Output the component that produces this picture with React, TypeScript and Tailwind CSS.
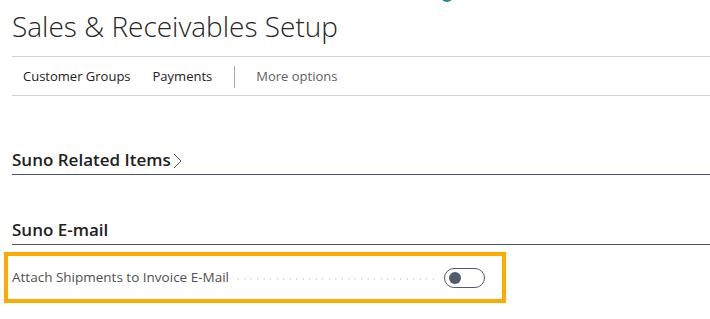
import React, { useState } from "react";

const font = { fontFamily: '"Open Sans", "Noto Sans", sans-serif' };

const actions = ["Customer Groups", "Payments"];

export default function App() {
  const [attach, setAttach] = useState(false);

  return (
    <div
      className="relative h-[319px] w-[710px] overflow-hidden bg-white pl-3 text-[#212121]"
      style={font}
    >
      {/* teal bit peeking in at the top */}
      <div className="absolute left-[441px] top-[-10px] h-[12px] w-[12px] rounded-full bg-[#1e8c8c]" />

      <h1 className="pt-[6px] text-[28px] leading-[40px] font-light text-[#262626]">
        Sales &amp; Receivables Setup
      </h1>

      <div className="mt-[10px] flex h-[40px] items-center border-y border-[#d4d4d4] pl-[11px] pt-[2px] text-[13px]">
        {actions.map((a) => (
          <span key={a} className="mr-[22px]">
            {a}
          </span>
        ))}
        <span className="h-[22px] w-px bg-[#a8a8a8]" />
        <span className="ml-[21px] text-[#616161]">More options</span>
      </div>

      <div className="mt-[49px] flex h-[30px] items-center border-b border-[#4b5468] text-[17px] font-semibold">
        Suno Related Items
        <svg width="9" height="16" viewBox="0 0 9 16" className="ml-[2px] mt-[2px]">
          <path d="M1 1l7 7-7 7" fill="none" stroke="#555" strokeWidth="1" />
        </svg>
      </div>

      <div className="mt-[40px] flex h-[30px] items-center border-b border-[#4b5468] text-[17px] font-semibold">
        Suno E-mail
      </div>

      <div className="-ml-2 mt-[7px] flex h-[51px] w-[502px] items-center border-4 border-[#ffaa00] pl-1 pr-[17px]">
        <span className="text-[13.5px] text-[#505050]">
          Attach Shipments to Invoice E-Mail
        </span>
        <span className="mx-[6px] mt-[3px] h-[2px] flex-1 bg-[radial-gradient(circle,#cfcfcf_1px,transparent_1px)] bg-[length:6.5px_2px]" />
        <button
          onClick={() => setAttach(!attach)}
          className="flex h-[20px] w-[41px] items-center rounded-full border border-[#505a6b] px-[4px]"
        >
          <span
            className={
              attach
                ? "ml-auto h-[12px] w-[12px] rounded-full bg-[#505a6b]"
                : "h-[12px] w-[12px] rounded-full bg-[#505a6b]"
            }
          />
        </button>
      </div>
    </div>
  );
}
